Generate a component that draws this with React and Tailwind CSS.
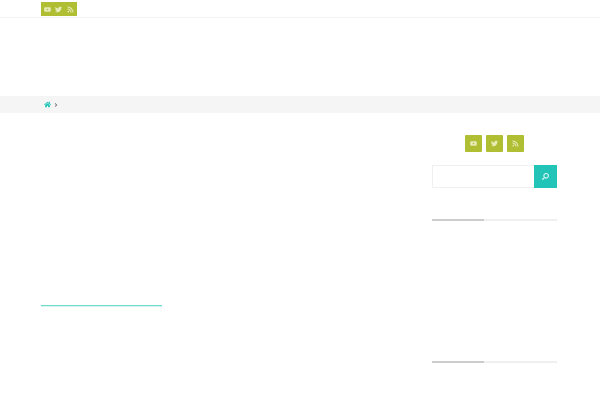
import { FaYoutube, FaTwitter, FaRss, FaHome, FaSearch, FaAngleRight } from "react-icons/fa";

const socials = [FaYoutube, FaTwitter, FaRss];

function SideHeading() {
  return (
    <div className="relative h-[2px] bg-[#efefef]">
      <div className="absolute left-0 top-0 h-[2px] w-[52px] bg-[#cccccc]" />
    </div>
  );
}

export default function App() {
  return (
    <div className="h-[400px] w-[600px] overflow-hidden bg-white font-['Liberation_Sans',sans-serif]">
      <div className="h-[18px] border-b border-[#f3f3f3] pl-[41px] pt-[2px]">
        <div className="grid h-[14px] w-[36px] grid-cols-3 items-center bg-[#afbe32] px-[1px] text-[#e6ebb8]">
          {socials.map((Icon, i) => (
            <span key={i} className="flex items-center justify-center">
              <Icon size={7} />
            </span>
          ))}
        </div>
      </div>

      <div className="h-[78px]" />

      <div className="flex h-[17px] items-center gap-[2px] bg-[#f5f5f5] pl-[44px]">
        <FaHome size={7} className="text-[#22c4b8]" />
        <FaAngleRight size={6} className="text-[#777]" />
      </div>

      <div className="flex pl-[41px]">
        <main className="w-[121px] pt-[192px]">
          <div className="h-[1px] bg-[#6fdccf]" />
          <div className="h-[1px] bg-[#d6f5f1]" />
        </main>

        <aside className="ml-[270px] w-[125px] pt-[22px]">
          <div className="flex justify-center gap-[4px]">
            {socials.map((Icon, i) => (
              <div
                key={i}
                className="flex h-[17px] w-[17px] items-center justify-center rounded-[1px] bg-[#afbe32] text-[#e6ebb8]"
              >
                <Icon size={7} />
              </div>
            ))}
          </div>

          <div className="mt-[13px] flex h-[23px]">
            <div className="flex-1 border border-r-0 border-[#f0f0f0]" />
            <div className="flex w-[23px] items-center justify-center bg-[#22c4b8] text-[#d8f5f2]">
              <FaSearch size={7} className="-scale-x-100" />
            </div>
          </div>

          <div className="mt-[31px]">
            <SideHeading />
          </div>
          <div className="mt-[140px]">
            <SideHeading />
          </div>
        </aside>
      </div>
    </div>
  );
}
